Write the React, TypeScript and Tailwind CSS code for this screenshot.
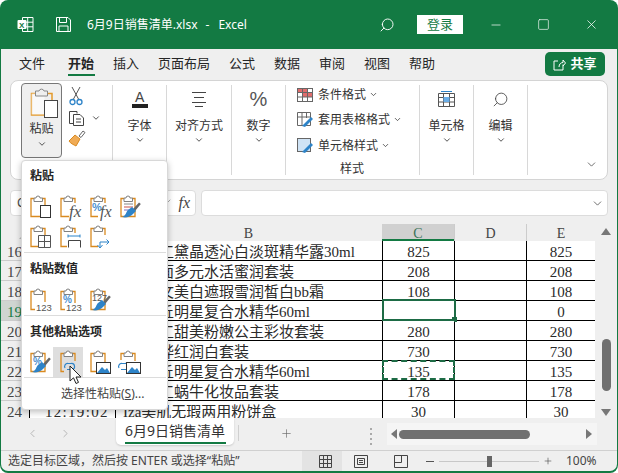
import { ChevronDown, Minus, Plus, Search, Square, X, ChevronLeft, ChevronRight, Check } from 'lucide-react';
import type { ReactNode } from 'react';

const UI_FONT = { fontFamily: '"Noto Sans", "Noto Sans CJK SC", sans-serif' };

const tabs = ['插入', '页面布局', '公式', '数据', '审阅', '视图', '帮助'];

const rows = [
  { n: 16, pad: 'pl-[43px]', name: '工黛晶透沁白淡斑精华露30ml', c: '825', e: '825' },
  { n: 17, pad: 'pl-[43px]', name: '面多元水活蜜润套装', c: '208', e: '208' },
  { n: 18, pad: 'pl-[43px]', name: '文美白遮瑕雪润皙白bb霜', c: '108', e: '108' },
  { n: 19, pad: 'pl-[43px]', name: '丘明星复合水精华60ml', c: '', e: '0' },
  { n: 20, pad: 'pl-[43px]', name: '工甜美粉嫩公主彩妆套装', c: '280', e: '280' },
  { n: 21, pad: 'pl-[43px]', name: '桦红润白套装', c: '730', e: '730' },
  { n: 22, pad: 'pl-[43px]', name: '丘明星复合水精华60ml', c: '135', e: '135' },
  { n: 23, pad: 'pl-[43px]', name: '工蜗牛化妆品套装', c: '178', e: '178' },
  { n: 24, pad: 'pl-[7px]', name: 'Iza美肌无瑕两用粉饼盒', c: '30', e: '30' },
];

function Clip({ children, body = true }: { children?: ReactNode; body?: boolean }) {
  return (
    <svg width="30" height="30" viewBox="0 0 30 30" fill="none">
      {body && <path d="M11 6.5H8V24.5H22V6.5H19" stroke="#d98a20" strokeWidth="1.3" />}
      <path d="M11 9.5V6H13a2 2 0 0 1 4 0H19.5V9.5Z" fill="#fff" stroke="#808080" strokeWidth="1" strokeLinejoin="round" />
      {children}
    </svg>
  );
}

function Brush() {
  return (
    <g>
      <path d="M20 17L26 10.5L27.8 12L22 19Z" fill="#666" />
      <path d="M9 25C13 24 13 20 15 18L19 15L23 19L20 22C17 25 13 26 9 25Z" fill="#2d83c8" />
    </g>
  );
}

const serif = { fontFamily: '"Liberation Serif", serif' };
const sans = { fontFamily: '"Liberation Sans", sans-serif' };

function Picture() {
  return (
    <g>
      <rect x="13.5" y="15.5" width="14" height="11" fill="#fff" stroke="#333" />
      <path d="M14 26L19 20L22 23L24 21L27 26Z" fill="#2d83c8" />
    </g>
  );
}

function Chain() {
  return <path d="M12 21a3 3 0 0 1 3-4.5h3a3 3 0 0 1 1 6h-5" stroke="#2d83c8" strokeWidth="1.2" fill="none" />;
}

const pasteIcons = [
  <Clip><rect x="17.5" y="13.5" width="10" height="12" fill="#fff" stroke="#333" /></Clip>,
  <Clip><rect x="16" y="11" width="14" height="16" fill="#fff" /><text x="16" y="25" fontSize="17" fontStyle="italic" fill="#555" style={serif}>fx</text></Clip>,
  <Clip><rect x="15" y="11" width="15" height="16" fill="#fff" /><text x="9" y="19" fontSize="11" fontWeight="700" fill="#4a90d0" style={sans}>%</text><text x="17" y="25" fontSize="16" fontStyle="italic" fill="#555" style={serif}>fx</text></Clip>,
  <Clip><path d="M11 12H20" stroke="#888" /><path d="M11 15H20" stroke="#c4504a" /><path d="M11 18H17" stroke="#7a6cc0" /><Brush /></Clip>,
  <Clip><rect x="15" y="13" width="14" height="13" fill="#fff" /><path d="M15.5 13.5H27.5V25.5H15.5ZM21.5 13.5V25.5M15.5 19.5H27.5" stroke="#555" /></Clip>,
  <Clip><rect x="14" y="11" width="15" height="16" fill="#fff" /><path d="M15 14H27M15 12.5V15.5M27 12.5V15.5" stroke="#2d83c8" /><path d="M15.5 25.5V18.5H27.5V25.5" stroke="#444" /></Clip>,
  <Clip><rect x="15" y="13" width="14" height="14" fill="#fff" /><path d="M17 25V20H26M23.5 17.5L26 20L23.5 22.5M14.5 23L17 26L19.5 23" stroke="#2d83c8" fill="none" /></Clip>,
];

const valueIcons = [
  <Clip><rect x="12" y="17" width="17" height="10" fill="#fff" /><text x="13" y="25.5" fontSize="9.5" fill="#555" style={sans}>123</text></Clip>,
  <Clip><text x="10" y="18" fontSize="10" fontWeight="700" fill="#4a90d0" style={sans}>%</text><rect x="12" y="18" width="17" height="9" fill="#fff" /><text x="13" y="25.5" fontSize="9.5" fill="#555" style={sans}>123</text></Clip>,
  <Clip><text x="9" y="16" fontSize="9" fill="#555" style={sans}>127</text><Brush /></Clip>,
];

const otherIcons = [
  <Clip><text x="10" y="18" fontSize="10" fontWeight="700" fill="#4a90d0" style={sans}>%</text><Brush /></Clip>,
  <Clip><rect x="11" y="14" width="19" height="14" fill="#dedede" /><Chain /></Clip>,
  <Clip><Picture /></Clip>,
  <Clip body={false}><path d="M11 6.5H8V13M19 6.5H22V14" stroke="#d98a20" strokeWidth="1.3" /><g transform="translate(-6 0)"><Chain /></g><Picture /></Clip>,
];

function IconRow({ icons, hoverIndex }: { icons: ReactNode[]; hoverIndex?: number }) {
  return (
    <div className="flex">
      {icons.map((icon, i) => (
        <div key={i} className={`w-[30px] h-[30px] ${i === hoverIndex ? 'bg-[#dedede]' : ''}`}>{icon}</div>
      ))}
    </div>
  );
}

function PastePopup() {
  return (
    <div className="absolute left-[21px] top-[160px] w-[147px] h-[250px] bg-white rounded-[4px] border border-[#d8d8d8] shadow-[0_2px_6px_rgba(0,0,0,0.25)] text-[12px] text-[#262626] z-20 pl-px">
      <div className="h-[28px] pl-[7px] pt-[6px] font-bold leading-[18px]">粘贴</div>
      <div className="h-[3px]" />
      <IconRow icons={pasteIcons.slice(0, 4)} />
      <IconRow icons={pasteIcons.slice(4)} />
      <div className="h-px bg-[#dcdcdc] mx-px" />
      <div className="h-[32px] pl-[7px] pt-[7px] font-bold leading-[18px]">粘贴数值</div>
      <IconRow icons={valueIcons} />
      <div className="h-px bg-[#dcdcdc] mx-px" />
      <div className="h-[31px] pl-[7px] pt-[7px] font-bold leading-[18px]">其他粘贴选项</div>
      <IconRow icons={otherIcons} hoverIndex={1} />
      <div className="h-px bg-[#dcdcdc] mx-px" />
      <div className="pl-[38px] pt-[7px] leading-[18px] text-[#444]">选择性粘贴(<span className="underline">S</span>)...</div>
      <svg className="absolute left-[47px] top-[204px]" width="14" height="20" viewBox="0 0 14 20">
        <path d="M1 1V16L4.5 12.8L7 18.5L9.5 17.4L7 12H12Z" fill="#fff" stroke="#222" strokeWidth="1" />
      </svg>
    </div>
  );
}

function TitleBar() {
  return (
    <div className="h-[49px] shrink-0 flex items-center text-white pl-[16px]">
      <svg width="17" height="17" viewBox="0 0 17 17" fill="none">
        <path d="M5.5 1.5H16V15.5H5.5ZM10.7 1.5V15.5M5.5 6.2H16M5.5 10.8H16" stroke="#fff" />
        <rect x="0.5" y="4" width="9" height="9" rx="1" fill="#fff" />
        <text x="2" y="11.5" fontSize="8" fontWeight="700" fill="#137a43" style={sans}>X</text>
      </svg>
      <svg className="ml-[21px]" width="17" height="17" viewBox="0 0 17 17" fill="none" stroke="#fff">
        <path d="M1.5 1.5H13L15.5 4V15.5H1.5ZM4.5 1.5V6.5H11.5V1.5M4 15.5V10H13V15.5" />
      </svg>
      <div className="ml-[15px] text-[12px]">6月9日销售清单.xlsx<span className="ml-[8px]">-</span><span className="ml-[9px]">Excel</span></div>
      <div className="flex-1" />
      <Search size={16} strokeWidth={1.4} className="-scale-x-100" />
      <div className="ml-[22px] w-[46px] h-[19px] bg-white text-[#137a43] text-[13px] leading-[19px] text-center">登录</div>
      <Minus size={14} strokeWidth={1.2} className="ml-[26px]" />
      <Square size={13} strokeWidth={1.2} className="ml-[34px]" />
      <X size={15} strokeWidth={1.2} className="ml-[34px] mr-[18px]" />
    </div>
  );
}

function TabBar() {
  return (
    <div className="h-[31px] shrink-0 flex items-start pl-[18px] text-[13px] text-[#262626] relative">
      <div className="pt-[3px] leading-[22px]">文件</div>
      <div className="ml-[23px] pt-[3px] leading-[22px] font-bold border-b-2 border-[#137a43] h-[27px] w-[27px]">开始</div>
      {tabs.map((t) => (
        <div key={t} className={`pt-[3px] leading-[22px] ${t === '插入' ? 'ml-[18px]' : 'ml-[19px]'}`}>{t}</div>
      ))}
      <div className="absolute left-[544px] top-[3px] w-[60px] h-[24px] rounded-[5px] bg-[#137a43] text-white flex items-center justify-center gap-[4px] font-bold text-[13px]">
        <svg width="13" height="13" viewBox="0 0 13 13" fill="none" stroke="#fff">
          <path d="M5 3H1V12H10V8M6 9C6 6 8 4.5 10 4.5V2L12.5 5L10 8V6.5" />
        </svg>
        共享
      </div>
    </div>
  );
}

function Sep() {
  return <div className="w-px bg-[#d8d8d8] my-[4px] shrink-0" />;
}

function BigGroup({ w, icon, label }: { w: string; icon: ReactNode; label: string }) {
  return (
    <div className={`${w} shrink-0 flex flex-col items-center text-[12px] text-[#333]`}>
      <div className="h-[30px] mt-[3px] flex items-center justify-center">{icon}</div>
      <div className="mt-[3px] leading-[18px]">{label}</div>
      <ChevronDown size={10} strokeWidth={2} className="text-[#333]" />
    </div>
  );
}

function StyleLine({ icon, label, className }: { icon: ReactNode; label: string; className?: string }) {
  return (
    <div className={`flex items-center h-[25px] ${className ?? ''}`}>
      {icon}
      <span className="ml-[5px]">{label}</span>
      <ChevronDown size={9} strokeWidth={2} className="ml-[3px]" />
    </div>
  );
}

function Ribbon() {
  return (
    <div className="h-[100px] shrink-0 mx-[9px] bg-white rounded-[8px] border border-[#d4d4d4] flex">
      {/* paste + clipboard */}
      <div className="w-[101px] shrink-0 flex pl-[10px] pt-[2px]">
        <div className="w-[41px] h-[75px] bg-[#efefef] border border-[#777] rounded-[4px] flex flex-col items-center text-[12px] text-[#333]">
          <svg className="mt-[2px]" width="32" height="33" viewBox="0 0 32 33" fill="none">
            <path d="M9 7.5H5.5V29H18M22 7.5H26V14" stroke="#e39a2c" strokeWidth="1.5" />
            <rect x="5.5" y="7.5" width="13" height="21" fill="#fff" opacity="0.6" />
            <path d="M9.5 10V5H13a2.6 2.6 0 0 1 5 0H21.5V10Z" fill="#efefef" stroke="#888" strokeLinejoin="round" />
            <rect x="18.5" y="14.5" width="13" height="17" fill="#fff" stroke="#444" />
          </svg>
          <div className="leading-[18px] mt-px">粘贴</div>
          <ChevronDown size={10} strokeWidth={2} className="mt-px" />
        </div>
        <div className="ml-[6px] flex flex-col text-[#333]">
          <svg className="mt-[3px] ml-[1px]" width="14" height="20" viewBox="0 0 14 20" fill="none">
            <path d="M3 1L9.5 13M11 1L4.5 13" stroke="#555" />
            <circle cx="3.5" cy="16" r="2.5" stroke="#2d83c8" strokeWidth="1.3" />
            <circle cx="10.5" cy="16" r="2.5" stroke="#2d83c8" strokeWidth="1.3" />
          </svg>
          <div className="flex items-center mt-[3px]">
            <svg width="18" height="18" viewBox="0 0 18 18" fill="none" stroke="#444">
              <path d="M5 14.5H1.5V2.5H9V4.5" />
              <path d="M5.5 5.5H12L15.5 9V16.5H5.5ZM8 10H13M8 13H13" fill="#fff" />
            </svg>
            <ChevronDown size={10} strokeWidth={2} className="ml-[5px]" />
          </div>
          <svg className="mt-[2px]" width="18" height="18" viewBox="0 0 18 18" fill="none">
            <path d="M11 7L15 2L17 3.5L13 8.5Z" stroke="#666" />
            <path d="M1 12L7 6L12 10L8 17C6 16 2 14 1 12Z" fill="#f0ab55" stroke="#d98a20" />
          </svg>
        </div>
      </div>
      <Sep />
      <BigGroup
        w="w-[53px]"
        label="字体"
        icon={
          <svg width="18" height="20" viewBox="0 0 18 20">
            <text x="4" y="13" fontSize="14" fill="#444" style={sans}>A</text>
            <rect x="1" y="15" width="16" height="4" fill="#222" />
          </svg>
        }
      />
      <Sep />
      <BigGroup
        w="w-[64px]"
        label="对齐方式"
        icon={
          <svg width="16" height="16" viewBox="0 0 16 16" stroke="#444">
            <path d="M1 1.5H15M3 6.5H13M1 11.5H15M4 15.5H12" />
          </svg>
        }
      />
      <Sep />
      <BigGroup
        w="w-[53px]"
        label="数字"
        icon={<span className="text-[20px] leading-none text-[#555]" style={sans}>%</span>}
      />
      <Sep />
      <div className="w-[133px] shrink-0 flex flex-col pl-[11px] pt-[1px] text-[12px] text-[#333]">
        <StyleLine
          label="条件格式"
          icon={
            <svg width="16" height="14" viewBox="0 0 16 14" stroke="#666" fill="none">
              <rect x="0.5" y="0.5" width="15" height="13" fill="#fff" />
              <rect x="1" y="1" width="9" height="3" fill="#e06c6c" stroke="none" />
              <rect x="6" y="5" width="9" height="4" fill="#e06c6c" stroke="none" />
              <path d="M0.5 4.5H15.5M0.5 9H15.5M5.5 0.5V13.5M10.5 0.5V13.5" />
            </svg>
          }
        />
        <StyleLine
          label="套用表格格式"
          icon={
            <svg width="16" height="16" viewBox="0 0 16 16" stroke="#666" fill="none">
              <path d="M0.5 0.5H13.5V13.5H0.5ZM0.5 5H13.5M5 0.5V13.5M9.5 0.5V6" />
              <path d="M5 14L14 5L16 7L8 15Z" fill="#2d83c8" stroke="none" />
            </svg>
          }
        />
        <StyleLine
          label="单元格样式"
          className="mt-px"
          icon={
            <svg width="16" height="16" viewBox="0 0 16 16" stroke="#666" fill="none">
              <rect x="0.5" y="0.5" width="13" height="13" fill="#cfe3f5" />
              <path d="M5 14L14 5L16 7L8 15Z" fill="#2d83c8" stroke="none" />
            </svg>
          }
        />
        <div className="text-center leading-[18px] mr-[12px] mt-[2px]">样式</div>
      </div>
      <Sep />
      <BigGroup
        w="w-[53px]"
        label="单元格"
        icon={
          <svg width="17" height="16" viewBox="0 0 17 16" fill="none" stroke="#555">
            <path d="M0.5 2.5H16.5V15.5H0.5ZM0.5 6.5H16.5M0.5 11H16.5M5.5 2.5V15.5M11.5 2.5V15.5" />
            <rect x="5.5" y="6" width="6" height="5" fill="#6aaee8" stroke="none" />
            <path d="M3 0.5H14" stroke="#2d83c8" />
          </svg>
        }
      />
      <Sep />
      <BigGroup w="w-[53px]" label="编辑" icon={<Search size={17} strokeWidth={1.2} className="-scale-x-100 text-[#444]" />} />
      <Sep />
      <div className="flex-1 flex items-end justify-end pr-[9px] pb-[8px]">
        <ChevronDown size={13} strokeWidth={1.4} className="text-[#444]" />
      </div>
    </div>
  );
}

function FormulaBar() {
  return (
    <div className="h-[26px] mt-[10px] shrink-0 flex mx-[9px] text-[#444]">
      <div className="w-[62px] bg-white rounded-[4px] border border-[#dcdcdc] pl-[6px] text-[12px] leading-[24px]">C19</div>
      <div className="w-[60px]" />
      <div className="w-[64px] bg-white rounded-[4px] border border-[#dcdcdc] flex items-center justify-end pr-[3px] gap-[4px]">
        <X size={12} className="text-[#aaa]" />
        <Check size={12} className="text-[#aaa]" />
        <span className="text-[16px] italic leading-none px-[2px]" style={serif}>fx</span>
      </div>
      <div className="flex-1 ml-[5px] bg-white rounded-[4px] border border-[#dcdcdc] flex items-center justify-end pr-[3px]">
        <ChevronDown size={13} strokeWidth={1.4} />
      </div>
    </div>
  );
}

function Sheet() {
  const cellFont = { fontFamily: '"Liberation Serif", "Noto Sans CJK SC", serif' };
  return (
    <div className="flex-1 min-h-0 flex mt-[8px]" style={cellFont}>
      <div className="w-[594px] shrink-0 flex flex-col overflow-hidden">
        {/* column headers */}
        <div className="h-[17px] shrink-0 flex text-[14px] text-[#444] leading-[19px] text-center">
          <div className="w-[28px] relative">
            <div className="absolute right-[3px] bottom-[2px] w-0 h-0 border-b-[7px] border-l-[7px] border-l-transparent border-b-[#bbb]" />
          </div>
          <div className="w-[86px]">A</div>
          <div className="w-[267px]">B</div>
          <div className="w-[72px] bg-[#d0d0d0] border-b-2 border-[#137a43] text-[#3d7358]">C</div>
          <div className="w-[72px] border-l border-[#ccc]">D</div>
          <div className="w-[69px] border-l border-[#ccc]">E</div>
        </div>
        {rows.map((r) => (
          <div key={r.n} className="h-[20px] shrink-0 flex text-[15px] text-[#2a2a2a] leading-[23px]">
            <div className={`w-[28px] pl-[6px] shrink-0 border-b border-[#ccc] ${r.n === 19 ? 'bg-[#cfd5d1] text-[#137a43]' : 'text-[#444]'}`}>{r.n}</div>
            <div className="w-[86px] shrink-0 bg-white border-l border-b border-black pl-[15px] tracking-[1.3px]">12:19:02</div>
            <div className={`w-[267px] h-full shrink-0 bg-white border-l border-b border-black whitespace-nowrap overflow-hidden ${r.pad}`}>
              {r.name}
            </div>
            <div className="w-[72px] shrink-0 bg-white border-l border-b border-black text-center relative">
              {r.c}
              {r.n === 19 && (
                <div className="absolute -left-px -top-[2px] w-[74px] h-[22px] border-2 border-[#1d6b45]">
                  <div className="absolute -right-[3px] -bottom-[3px] w-[5px] h-[5px] bg-[#1d6b45]" />
                </div>
              )}
              {r.n === 22 && <div className="absolute -left-px -top-px w-[73px] h-[20px] border-2 border-dashed border-[#1d6b45]" />}
            </div>
            <div className="w-[72px] shrink-0 bg-white border-l border-b border-black" />
            <div className="w-[69px] shrink-0 bg-white border-l border-b border-black text-center">{r.e}</div>
          </div>
        ))}
      </div>
      {/* vertical scrollbar */}
      <div className="flex-1 flex flex-col items-center pt-[4px] pb-[2px]">
        <div className="w-0 h-0 border-x-[5px] border-x-transparent border-b-[7px] border-b-[#777]" />
        <div className="w-[9px] h-[52px] mt-[104px] rounded-full bg-[#707070]" />
        <div className="flex-1" />
        <div className="w-0 h-0 border-x-[5px] border-x-transparent border-t-[7px] border-t-[#777]" />
      </div>
    </div>
  );
}

function SheetTabs() {
  return (
    <div className="h-[32px] shrink-0 flex text-[#999]">
      <ChevronLeft size={13} strokeWidth={1.2} className="ml-[25px] mt-[9px]" />
      <ChevronRight size={13} strokeWidth={1.2} className="ml-[20px] mt-[9px]" />
      <div className="ml-[44px] w-[118px] h-[27px] bg-white rounded-b-[5px] shadow-[0_1px_2px_rgba(0,0,0,0.15)] flex flex-col items-center text-[14px] text-[#333]">
        <div className="leading-[22px] mt-[2px]">6月9日销售清单</div>
        <div className="w-[101px] h-[2px] bg-[#137a43]" />
      </div>
      <div className="ml-[4px] w-px h-[16px] mt-[7px] bg-[#d0d0d0]" />
      <Plus size={13} strokeWidth={1.2} className="ml-[41px] mt-[9px] text-[#666]" />
      <div className="ml-[77px] mt-[10px] flex flex-col gap-[3px]">
        <div className="w-[2px] h-[2px] bg-[#aaa]" />
        <div className="w-[2px] h-[2px] bg-[#aaa]" />
        <div className="w-[2px] h-[2px] bg-[#aaa]" />
        <div className="w-[2px] h-[2px] bg-[#aaa]" />
      </div>
      <div className="ml-[15px] w-[210px] h-[22px] mt-[5px] bg-[#f5f5f5] flex items-center pl-[4px] pr-[5px]">
        <div className="w-0 h-0 border-y-[5px] border-y-transparent border-r-[6px] border-r-[#777]" />
        <div className="ml-[2px] w-[131px] h-[9px] rounded-full bg-[#707070]" />
        <div className="flex-1" />
        <div className="w-0 h-0 border-y-[5px] border-y-transparent border-l-[6px] border-l-[#777]" />
      </div>
    </div>
  );
}

function StatusBar() {
  return (
    <div className="h-[21px] shrink-0 border-t border-[#d0d0d0] flex items-center text-[12px] text-[#444]">
      <div className="ml-[7px] w-[294px] whitespace-nowrap">选定目标区域，然后按 ENTER 或选择“粘贴”</div>
      <div className="flex-1 flex h-full items-center">
        <div className="w-[7px] h-full bg-[#e3e3e3]" />
        <div className="w-[33px] h-full bg-[#e3e3e3] flex items-center justify-center">
          <svg width="13" height="13" viewBox="0 0 13 13" fill="none" stroke="#444">
            <path d="M0.5 0.5H12.5V12.5H0.5ZM4.5 0.5V12.5M8.5 0.5V12.5M0.5 4.5H12.5M0.5 8.5H12.5" />
          </svg>
        </div>
        <svg className="ml-[12px]" width="14" height="13" viewBox="0 0 14 13" fill="none" stroke="#444">
          <path d="M0.5 0.5H13.5V12.5H0.5ZM3.5 3.5H10.5V9.5H3.5ZM5 5.5H9M5 7.5H9" />
        </svg>
        <svg className="ml-[26px]" width="14" height="13" viewBox="0 0 14 13" fill="none" stroke="#444">
          <path d="M0.5 0.5H13.5V12.5H0.5ZM0.5 7.5H7.5V0.5" />
        </svg>
        <div className="ml-[18px] w-[8px] h-px bg-[#555]" />
        <div className="ml-[5px] w-[100px] h-px bg-[#c8c8c8] relative">
          <div className="absolute left-[48px] -top-[5px] w-[5px] h-[11px] bg-[#666]" />
        </div>
        <Plus size={10} strokeWidth={1.4} className="ml-[4px]" />
        <span className="ml-[13px] text-[12px]">100%</span>
      </div>
    </div>
  );
}

export default function App() {
  return (
    <div className="w-[618px] h-[473px] bg-white overflow-hidden" style={UI_FONT}>
      <div className="relative w-full h-full bg-[#137a43] rounded-[8px] px-px pb-[2px] flex flex-col">
        <TitleBar />
        <div className="flex-1 min-h-0 bg-[#efefef] rounded-b-[7px] flex flex-col">
          <TabBar />
          <Ribbon />
          <FormulaBar />
          <Sheet />
          <SheetTabs />
          <StatusBar />
        </div>
        <PastePopup />
      </div>
    </div>
  );
}
